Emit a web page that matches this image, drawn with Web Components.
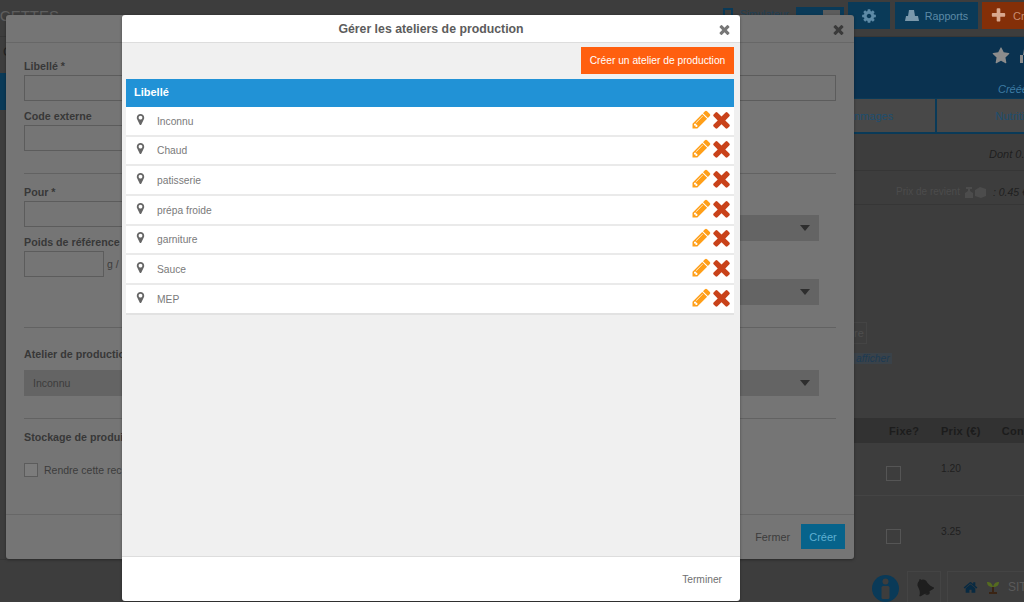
<!DOCTYPE html>
<html lang="fr">
<head>
<meta charset="utf-8">
<title>Ateliers de production</title>
<style>
  html, body { margin: 0; height: 100%; overflow: hidden; background: #3d3d3d; }
  body { font: 11px "Liberation Sans", Arial, sans-serif; }
  .recipe-footer { display: flex; justify-content: flex-end; align-items: center; gap: 11px; height: 44px; padding-right: 9px; }
</style>
</head>
<body>

<app-page></app-page>

<modal-dialog class="back" heading="" style="--left:6px;--top:15px;--w:848px;--h:544px;--bg:#757575;--line:#676767;--close:#3a3a3a">
  <recipe-form></recipe-form>
  <div slot="footer" class="recipe-footer">
    <span style="color:#3c3c3c;font-size:10.8px">Fermer</span>
    <span style="background:#07638b;color:#5fb0d2;width:44px;height:25px;margin-top:-1px;display:flex;align-items:center;justify-content:center">Créer</span>
  </div>
</modal-dialog>

<modal-dialog heading="Gérer les ateliers de production" style="--left:122px;--top:15px;--w:618px;--h:586px;--bg:#fff;--line:#ddd;--close:#777;--title:#5c5c5c">
  <workshop-list></workshop-list>
  <div slot="footer" style="display:flex;justify-content:flex-end;align-items:center;height:44px;padding-right:18px;color:#707070;font-size:10.25px">Terminer</div>
</modal-dialog>

<script>
// font awesome 4 shapes, viewBox 0 0 1792 1792
const ICONS = {
  pencil: 'M491 1536l91-91-235-235-91 91v107h128v128h107zm523-928q0-22-22-22-10 0-17 7l-542 542q-7 7-7 17 0 22 22 22 10 0 17-7l542-542q7-7 7-17zm-54-192l416 416-832 832h-416v-416zm683 96q0 53-37 90l-166 166-416-416 166-165q36-38 90-38 53 0 91 38l235 234q37 39 37 91z',
  times: 'M1490 1322q0 40-28 68l-136 136q-28 28-68 28t-68-28l-294-294-294 294q-28 28-68 28t-68-28l-136-136q-28-28-28-68t28-68l294-294-294-294q-28-28-28-68t28-68l136-136q28-28 68-28t68 28l294 294 294-294q28-28 68-28t68 28l136 136q28 28 28 68t-28 68l-294 294 294 294q28 28 28 68z',
  marker: 'M1152 640q0-106-75-181t-181-75-181 75-75 181 75 181 181 75 181-75 75-181zm256 0q0 109-33 179l-364 774q-16 33-47.5 52t-67.5 19-67.5-19-46.5-52l-365-774q-33-70-33-179 0-212 150-362t362-150 362 150 150 362z',
  star: 'M1728 647q0 22-26 48l-363 354 86 500q1 7 1 20 0 21-10.5 35.5t-30.5 14.5q-19 0-40-12l-449-236-449 236q-22 12-40 12-21 0-31.5-14.5t-10.5-35.5q0-6 2-20l86-500-364-354q-25-27-25-48 0-37 56-46l502-73 225-455q19-41 49-41t49 41l225 455 502 73q56 9 56 46z',
  cog: 'M1152 896q0-106-75-181t-181-75-181 75-75 181 75 181 181 75 181-75 75-181zm512-109v222q0 12-8 23t-20 13l-185 28q-19 54-39 91 35 50 107 138 10 12 10 25t-9 23q-27 37-99 108t-94 71q-12 0-26-9l-138-108q-44 23-91 38-16 136-29 186-7 28-36 28h-222q-14 0-24.5-8.5t-11.5-21.5l-28-184q-49-16-90-37l-141 107q-10 9-25 9-14 0-25-11-126-114-165-168-7-10-7-23 0-12 8-23 15-21 51-66.5t54-70.5q-27-50-41-99l-183-27q-13-2-21-12.5t-8-23.5v-222q0-12 8-23t19-13l186-28q14-46 39-92-40-57-107-138-10-12-10-24 0-10 9-23 26-36 98.5-107.5t94.5-71.5q13 0 26 10l138 107q44-23 91-38 16-136 29-186 7-28 36-28h222q14 0 24.5 8.5t11.5 21.5l28 184q49 16 90 37l142-107q9-9 24-9 13 0 25 10 129 119 165 170 7 8 7 22 0 12-8 23-15 21-51 66.5t-54 70.5q26 50 41 98l183 28q13 2 21 12.5t8 23.5z',
  plus: 'M1600 736v192q0 40-28 68t-68 28h-416v416q0 40-28 68t-68 28h-192q-40 0-68-28t-28-68v-416h-416q-40 0-68-28t-28-68v-192q0-40 28-68t68-28h416v-416q0-40 28-68t68-28h192q40 0 68 28t28 68v416h416q40 0 68 28t28 68z',
  home: 'M1472 992v480q0 26-19 45t-45 19h-384v-384h-256v384h-384q-26 0-45-19t-19-45v-480q0-1 .5-3t.5-3l575-474 575 474q1 2 1 6zm223-69l-62 74q-8 9-21 11h-3q-13 0-21-7l-692-577-692 577q-12 8-24 7-13-2-21-11l-62-74q-8-10-7-23.5t11-21.5l719-599q32-26 76-26t76 26l244 204v-195q0-14 9-23t23-9h192q14 0 23 9t9 23v408l219 182q10 8 11 21.5t-7 23.5z',
  bell: 'M912 1696q0-16-16-16-59 0-101.5-42.5t-42.5-101.5q0-16-16-16t-16 16q0 73 51.5 124.5t124.5 51.5q16 0 16-16zm816-288q0 52-38 90t-90 38h-448q0 106-75 181t-181 75-181-75-75-181h-448q-52 0-90-38t-38-90q50-42 91-88t85-119.5 74.5-158.5 50-206 19.5-260q0-152 117-282.5t307-158.5q-8-19-8-39 0-40 28-68t68-28 68 28 28 68q0 20-8 39 190 28 307 158.5t117 282.5q0 139 19.5 260t50 206 74.5 158.5 85 119.5 91 88z'
};
const icon = (name, size, color) =>
  `<svg viewBox="0 0 1792 1792" width="${size}" height="${size}" fill="${color}" style="display:block;flex:none"><path d="${ICONS[name]}"/></svg>`;

class ModalDialog extends HTMLElement {
  constructor() {
    super();
    this.root = this.attachShadow({mode: 'open'});
    this.root.innerHTML = `
      <style>
      :host {
        position: absolute;
        left: var(--left); top: var(--top);
        width: var(--w); height: var(--h);
        display: flex;
        flex-direction: column;
        background: var(--bg);
        border-radius: 3px;
        box-shadow: 0 1px 3px rgba(0,0,0,.35);
      }
      header {
        height: 27px;
        flex: none;
        border-bottom: 1px solid var(--line);
        display: flex;
        align-items: center;
        justify-content: center;
        position: relative;
        font-size: 12.3px;
        font-weight: bold;
        color: var(--title, #333);
      }
      .close { position: absolute; right: 8px; top: 7px; }
      main { flex: 1; min-height: 0; display: flex; }
      footer { flex: none; border-top: 1px solid var(--line); }
      ::slotted(*) { flex: 1; min-width: 0; }
      </style>
      <header><span id="title"></span><span class="close"></span></header>
      <main><slot></slot></main>
      <footer><slot name="footer"></slot></footer>
    `;
  }

  connectedCallback() {
    this.root.getElementById('title').textContent = this.getAttribute('heading');
    this.root.querySelector('.close').innerHTML =
      icon('times', 15, getComputedStyle(this).getPropertyValue('--close').trim());
  }
}

class WorkshopRow extends HTMLElement {
  constructor() {
    super();
    this.root = this.attachShadow({mode: 'open'});
    this.root.innerHTML = `
      <style>
      :host {
        display: flex;
        align-items: center;
        height: 27.67px;
        padding-left: 8px;
        background: #fff;
        border-bottom: 2px solid #eaeaea;
        color: #7a7a7a;
        font-size: 10.25px;
      }
      .pin { margin-right: 10px; margin-top: -3px; }
      .label { flex: 1; margin-top: 1px; }
      .actions { display: flex; gap: 0; align-items: center; margin-top: -3px; }
      .actions svg + svg { margin-left: -3px; }
      </style>
      <span class="pin">${icon('marker', 13, '#666')}</span>
      <span class="label"><slot></slot></span>
      <span class="actions">${icon('pencil', 21, '#ff9f19')}${icon('times', 25, '#c9421a')}</span>
    `;
  }
}

class WorkshopList extends HTMLElement {
  constructor() {
    super();
    this.root = this.attachShadow({mode: 'open'});
    const rows = ['Inconnu', 'Chaud', 'patisserie', 'prépa froide', 'garniture', 'Sauce', 'MEP'];
    this.root.innerHTML = `
      <style>
      :host { display: block; background: #f0f0f0; padding: 4px 6px 0 4px; }
      .tools { display: flex; justify-content: flex-end; margin-bottom: 5px; }
      button {
        all: unset;
        background: #ff5f0f;
        color: #fff;
        height: 27px;
        width: 153px;
        text-align: center;
        font-size: 10.25px;
        line-height: 27px;
      }
      .head {
        height: 28px;
        background: #2192d6;
        color: #fff;
        font-weight: bold;
        font-size: 11px;
        line-height: 27px;
        padding-left: 8px;
      }
      workshop-row:last-child { border-bottom-color: #e2e2e2; }
      </style>
      <div class="tools"><button>Créer un atelier de production</button></div>
      <div class="head">Libellé</div>
      ${rows.map(r => `<workshop-row>${r}</workshop-row>`).join('')}
    `;
  }
}

class RecipeForm extends HTMLElement {
  constructor() {
    super();
    this.root = this.attachShadow({mode: 'open'});
    this.root.innerHTML = `
      <style>
      :host { display: block; padding: 16px 18px 0; color: #3c3c3c; font-size: 10.5px; overflow: hidden; }
      label, h4 { display: block; margin: 0; height: 14px; line-height: 14px; font-size: 10.7px; font-weight: bold; color: #383838; }
      .in { height: 24px; border: 1px solid #5c5c5c; margin-top: 2px; }
      .half { width: 400px; }
      hr { border: 0; height: 1px; background: #626262; margin: 0; }
      .cols { display: grid; grid-template-columns: 1fr 1fr; column-gap: 20px; }
      .sel {
        height: 26px;
        background: #646464;
        margin-right: 17px;
        display: flex;
        align-items: center;
        padding: 0 9px;
        color: #3c3c3c;
      }
      .sel::after {
        content: '';
        margin-left: auto;
        border: 5px solid transparent;
        border-top: 6px solid #2e2e2e;
        border-bottom: 0;
      }
      .poids { display: flex; align-items: center; gap: 3px; margin-top: 2px; }
      .poids .in { width: 78px; margin: 0; height: 24px; }
      .check { display: flex; align-items: center; gap: 6px; margin-top: 19px; }
      .box { width: 12px; height: 12px; border: 1px solid #5c5c5c; background: #7c7c7c; }
      </style>
      <label>Libellé *</label>
      <div class="in"></div>
      <label style="margin-top:8px">Code externe</label>
      <div class="in half"></div>
      <hr style="margin-top:22px">
      <div class="cols" style="height:153px">
        <div>
          <label style="margin-top:11px">Pour *</label>
          <div class="in"></div>
          <label style="margin-top:8px">Poids de référence</label>
          <div class="poids"><div class="in"></div><span>g /</span></div>
        </div>
        <div style="padding-top:41px">
          <div class="sel"></div>
          <div class="sel" style="margin-top:38px"></div>
        </div>
      </div>
      <hr>
      <label style="margin-top:19px">Atelier de production</label>
      <div class="sel" style="margin-top:9px">Inconnu</div>
      <hr style="margin-top:22px">
      <h4 style="margin-top:11px">Stockage de produi</h4>
      <div class="check"><span class="box"></span>Rendre cette rec</div>
    `;
  }
}

class AppPage extends HTMLElement {
  constructor() {
    super();
    this.root = this.attachShadow({mode: 'open'});
    this.root.innerHTML = `
      <style>
      :host {
        display: grid;
        grid-template-columns: 854px 170px;
        grid-template-rows: 37px 1fr;
        width: 1024px;
        height: 602px;
        overflow: hidden;
        color: #2c2c2c;
        background: #3d3d3d;
        --blue: #0a3a58;
      }
      .top {
        grid-column: 1 / 3;
        display: flex;
        align-items: flex-start;
        gap: 4px;
        border-bottom: 1px solid #363636;
        box-sizing: border-box;
      }
      .top h1 { margin: 7px auto 0 -21px; font-size: 15px; font-weight: normal; color: #5e5e5e; line-height: 18px; }
      .sim { display: flex; align-items: center; gap: 7px; color: #203f55; margin-top: 8px; margin-right: 3px; font-size: 10.25px; }
      .bluebtn { width: 48px; height: 20px; background: var(--blue); margin-top: 7px; box-sizing: border-box; padding: 3px 4px 0 27px; }
      .bluebtn i { display: block; height: 12px; background: #5c5c5c; }
      .btn {
        height: 27px;
        margin-top: 2px;
        background: var(--blue);
        color: #5d8aa6;
        display: flex;
        align-items: center;
        justify-content: center;
        gap: 6px;
      }
      .gear { width: 42px; }
      .rap { width: 83px; margin-left: 1px; font-size: 10.7px; }
      .add { width: 42px; background: #842f08; color: #c98d70; justify-content: flex-start; padding-left: 8px; gap: 6px; box-sizing: border-box; overflow: hidden; white-space: nowrap; }
      .left .c { padding: 7px 0 0 3px; height: 29px; color: #222; font-size: 13px; box-sizing: content-box; }
      .left .r { width: 6px; height: 37px; background: var(--blue); }
      .left .ln { height: 1px; width: 6px; margin-top: 449px; background: #363636; }
      .right { overflow: hidden; white-space: nowrap; }
      .hero {
        height: 61px;
        background: #0a3250;
        display: flex;
        flex-direction: column;
        box-sizing: border-box;
        padding-top: 10px;
      }
      .marks { display: flex; gap: 10px; padding-left: 138px; height: 18px; }
      .cree { margin: 18px 0 0 144px; font-style: italic; color: #3d7ba3; }
      .tabs { display: flex; height: 33px; border-bottom: 2px solid var(--blue); border-top: 1px solid var(--blue); }
      .tabs div { display: flex; align-items: center; color: #1d4e6f; background: #484848; }
      .tabs .a { width: 82px; border-right: 2px solid var(--blue); }
      .tabs .b { flex: 1; padding-left: 58px; }
      .dont { height: 37px; padding: 14px 0 0 135px; box-sizing: border-box; font-style: italic; border-bottom: 1px solid #363636; color: #1f1f1f; }
      .prix { height: 34px; padding: 15px 0 0 42px; box-sizing: border-box; color: #4c4c4c; border-bottom: 1px solid #363636; display: flex; gap: 5px; font-size: 10px; }
      .prix i { color: #1f1f1f; margin-left: 2px; font-size: 10.5px; }
      .mini { display: flex; gap: 2px; margin-top: 1px; }
      .blank { height: 213px; position: relative; }
      .re { position: absolute; left: 0; top: 117px; }
      .row1 { height: 21px; display: flex; align-items: center; }
      .row1 span { width: 12px; height: 20px; line-height: 20px; border: 1px solid #444; border-left: 0; color: #4e4e4e; }
      .aff { margin-top: 10px; font-style: italic; color: #1d3a52; background: #3a4249; padding: 0 2px; display: inline-block; font-size: 10.25px; }
      .thead { height: 25px; background: #323232; font-weight: bold; color: #1c1c1c; display: flex; align-items: center; letter-spacing: .3px; }
      .thead span:nth-child(1) { margin-left: 35px; width: 53px; }
      .thead span:nth-child(2) { width: 62px; }
      .trow { height: 52px; border-bottom: 1px solid #444; display: flex; align-items: flex-start; }
      .box { width: 13px; height: 13px; border: 1px solid #555; margin: 23px 0 0 32px; }
      .val { margin: 20px 0 0 40px; color: #1f1f1f; font-size: 10.25px; }
      .trow.last { border: 0; height: 75px; }
      .trow.last .box { margin-top: 33px; }
      .trow.last .val { margin-top: 30px; }
      .foot { display: flex; align-items: flex-start; gap: 6px; padding-left: 18px; }
      .info { margin-top: 4px; flex: none; }
      .cell { height: 40px; border: 1px solid #444; display: flex; align-items: center; justify-content: center; flex: none; padding-bottom: 8px; box-sizing: border-box; }
      .bell { width: 34px; margin-left: 2px; }
      .bell svg { transform: rotate(-30deg); }
      .site { padding-left: 15px; width: 90px; justify-content: flex-start; gap: 9px; color: #5a5a5a; font-size: 12px; }
      </style>
      <div class="top">
        <h1>RECETTES</h1>
        <span class="sim"><svg width="10" height="12" viewBox="0 0 10 12"><rect x="1" y="1" width="8" height="10" fill="none" stroke="#0a3a58" stroke-width="2"/></svg>Simulateur</span>
        <span class="bluebtn"><i></i></span>
        <span class="btn gear">${icon('cog', 16, '#5d8aa6')}</span>
        <span class="btn rap"><svg width="14" height="12" viewBox="0 0 14 12" fill="#7a98ab"><path d="M4 0h5l1 6H3z"/><path d="M1 6h12l1 5H0z"/></svg>Rapports</span>
        <span class="btn add">${icon('plus', 17, '#d9a88e')}Cr</span>
      </div>
      <div class="left"><div class="c">C</div><div class="r"></div><div class="ln"></div></div>
      <div class="right">
        <div class="hero">
          <div class="marks">${icon('star', 18, '#8c8c8c')}<svg width="18" height="18" viewBox="0 0 18 18" fill="#8c8c8c" style="flex:none"><path d="M0 8h3v8H0zM3 8l1-6h2v6z"/></svg></div>
          <div class="cree">Créée</div>
        </div>
        <div class="tabs"><div class="a">nmages</div><div class="b">Nutriti</div></div>
        <div class="dont">Dont 0.0</div>
        <div class="prix"><span>Prix de revient</span>
          <span class="mini"><svg width="8" height="11" viewBox="0 0 8 11" fill="#4c4c4c"><path d="M1 0h6v2H5v2l3 2v5H0V6l3-2V2H1z"/></svg><svg width="11" height="11" viewBox="0 0 11 11" fill="#4c4c4c"><path d="M0 3l5-3 6 2v7l-5 2-6-2z"/></svg></span>
          <i>: 0.45 €</i></div>
        <div class="blank">
          <div class="re"><div class="row1"><span>re</span></div><span class="aff">afficher</span></div>
        </div>
        <div class="thead"><span>Fixe?</span><span>Prix (€)</span><span>Con</span></div>
        <div class="trow"><span class="box"></span><span class="val">1.20</span></div>
        <div class="trow last"><span class="box"></span><span class="val">3.25</span></div>
        <div class="foot">
          <svg class="info" width="27" height="27" viewBox="0 0 27 27"><circle cx="13.5" cy="13.5" r="13.5" fill="#0a3a58"/><circle cx="13.5" cy="6.5" r="3" fill="#3d3d3d"/><rect x="9.5" y="11" width="8" height="13" rx="1.5" fill="#3d3d3d"/></svg>
          <span class="cell bell">${icon('bell', 18, '#1e1e1e')}</span>
          <span class="cell site">${icon('home', 15, '#082a42')}<svg width="12" height="16" viewBox="0 0 12 16"><path d="M6 8C5 4 3 3 0 3c0 3 2 5 6 5zM6 8c1-4 3-5 6-5 0 3-2 5-6 5z" fill="#556b1f"/><path d="M5 8h2v5h3v2H2v-2h3z" fill="#3a2414"/></svg>SITE</span>
        </div>
      </div>
    `;
  }
}

customElements.define('workshop-row', WorkshopRow);
customElements.define('workshop-list', WorkshopList);
customElements.define('recipe-form', RecipeForm);
customElements.define('app-page', AppPage);
customElements.define('modal-dialog', ModalDialog);
</script>
</body>
</html>
